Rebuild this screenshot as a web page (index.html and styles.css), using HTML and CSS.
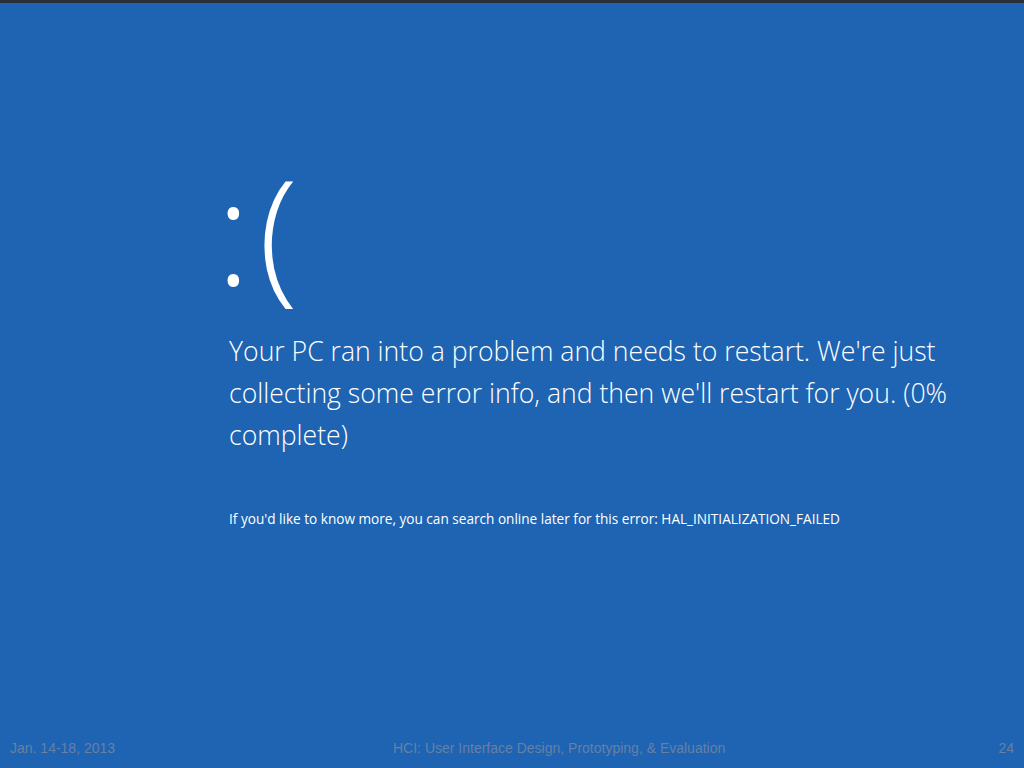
FILE: index.html
```html
<!DOCTYPE html>
<html lang="en">
 <head>
  <meta charset="utf-8">
  <title>Your PC ran into a problem</title>
  <link rel="stylesheet" href="styles.css">
 </head>
 <body>
  <div class="topbar"></div>
  <div class="screen">
   <div class="crash">
    <div class="face"><span class="eyes">:</span><span class="mouth">(</span></div>
    <p class="message">Your PC ran into a problem and needs to restart. We're just
     collecting some error info, and then we'll restart for you. (0%
     complete)</p>
    <p class="more">If you'd like to know more, you can search online later for this error: HAL_INITIALIZATION_FAILED</p>
   </div>
  </div>
  <div class="footer">
   <span class="date">Jan. 14-18, 2013</span>
   <span class="course">HCI: User Interface Design, Prototyping, &amp; Evaluation</span>
   <span class="page">24</span>
  </div>
 </body>
</html>
```
FILE: styles.css
```css
html, body { margin: 0; padding: 0; }
body { width: 1024px; height: 768px; background: #1e64b2; color: #ffffff;
       font-family: "Open Sans", "Noto Sans", sans-serif;
       display: flex; flex-direction: column; overflow: hidden; }
.topbar { height: 3px; background: #2b2f38; }
.screen { flex: 1; padding-left: 229px; }
.crash { padding-top: 160px; }
.face { font-size: 145px; font-weight: 300; line-height: 134px; height: 134px; }
.face .eyes { margin-left: -13px; }
.face .mouth { margin-left: 8px; }
.message { margin: 33px 0 0 0; width: 760px; font-size: 26.6px; line-height: 42px; font-weight: 300; }
.more { margin: 54px 0 0 0; font-size: 13.6px; line-height: 18px; }
.footer { height: 40px; display: flex; align-items: center; padding: 0 10px;
          font-family: "Liberation Sans", Arial, sans-serif; font-size: 14px; color: #6680a6; }
.footer .date { width: 383px; }
.footer .course { flex: 1; }
.footer .page { text-align: right; }
```
